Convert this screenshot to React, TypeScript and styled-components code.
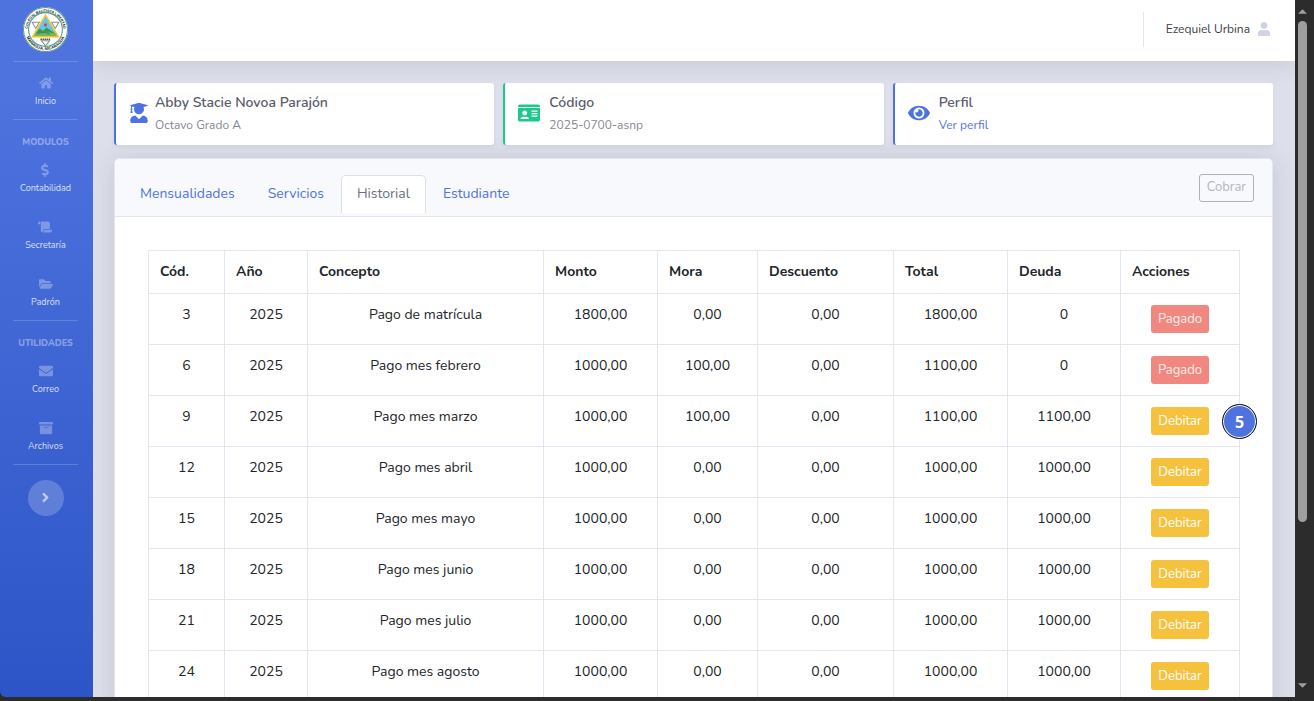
import React from "react";
import styled, { createGlobalStyle } from "styled-components";
import type { IconType } from "react-icons";
import {
  FaHome,
  FaDollarSign,
  FaScroll,
  FaFolderOpen,
  FaEnvelope,
  FaArchive,
  FaAngleRight,
  FaUserGraduate,
  FaIdCard,
  FaEye,
  FaUser,
} from "react-icons/fa";

const GlobalStyle = createGlobalStyle`
  *, *::before, *::after { box-sizing: border-box; }
  body {
    margin: 0;
    background: #2c2c2c;
    color: #212529;
    font-family: Nunito, Lato, "Liberation Sans", sans-serif;
    font-size: 14px;
    line-height: 22px;
  }
  a { text-decoration: none; }
  button { font-family: inherit; cursor: pointer; }
`;

const Window = styled.div`
  display: flex;
  height: 100vh;
  padding-bottom: 4px;
  overflow: hidden;
`;

const Viewport = styled.div`
  display: flex;
  flex: 1;
  min-width: 0;
  overflow: hidden;
  border-bottom-left-radius: 6px;
`;

const Sidebar = styled.nav`
  display: flex;
  flex-direction: column;
  align-items: center;
  flex: none;
  width: 93px;
  padding-right: 2px;
  background: linear-gradient(180deg, #4e73df 91px, #224abe 914px);
`;

const Brand = styled.a`
  display: flex;
  justify-content: center;
  padding: 7px 0 9px;
`;

const Divider = styled.hr`
  flex: none;
  width: 65px;
  height: 1px;
  margin: 0;
  border: 0;
  background: rgba(255, 255, 255, 0.18);
`;

const NavHeading = styled.div`
  height: 29px;
  padding-top: 16px;
  color: rgba(255, 255, 255, 0.4);
  font-size: 9px;
  font-weight: 800;
  line-height: 13px;
`;

const NavLink = styled.a`
  display: flex;
  flex-direction: column;
  align-items: center;
  height: 57px;
  padding-top: 14px;
  color: rgba(255, 255, 255, 0.8);
  font-size: 9px;
  line-height: 15px;

  svg {
    width: 14px;
    height: 14px;
    margin-bottom: 4px;
    color: rgba(255, 255, 255, 0.3);
  }
`;

const ToggleButton = styled.button`
  display: flex;
  align-items: center;
  justify-content: center;
  width: 36px;
  height: 36px;
  margin-top: 15px;
  padding: 0 0 2px;
  border: 0;
  border-radius: 50%;
  background: rgba(255, 255, 255, 0.2);
  color: rgba(255, 255, 255, 0.6);
  font-size: 15px;
`;

const Main = styled.main`
  flex: 1;
  min-width: 0;
  overflow: hidden;
  background: #dddfeb;
`;

const Topbar = styled.header`
  display: flex;
  align-items: center;
  justify-content: flex-end;
  height: 61px;
  padding: 0 24px 3px;
  background: #fff;
  box-shadow: 0 2px 25px rgba(58, 59, 69, 0.15);
`;

const UserLink = styled.a`
  display: flex;
  align-items: center;
  gap: 7px;
  height: 35px;
  padding-left: 22px;
  border-left: 1px solid #e3e6f0;
  color: #3a3b45;
  font-size: 12px;

  svg {
    width: 14px;
    height: 14px;
    color: #d1d3e2;
  }
`;

const Content = styled.div`
  padding: 22px 22px 22px 21px;
`;

const SummaryRow = styled.section`
  display: grid;
  grid-template-columns: repeat(3, 1fr);
  gap: 9px;
  margin-bottom: 13px;
`;

const SummaryCard = styled.article<{ $accent: string; $gap: number }>`
  display: flex;
  align-items: center;
  gap: ${(p) => p.$gap}px;
  height: 62px;
  padding: 0 13px;
  border-left: 2px solid ${(p) => p.$accent};
  border-radius: 3px;
  background: #fff;
  box-shadow: 0 2px 4px rgba(0, 0, 0, 0.05);

  > svg {
    flex: none;
    margin-bottom: 2px;
    color: ${(p) => p.$accent};
  }
`;

const SummaryTitle = styled.div`
  color: #5a5c69;
  font-size: 14px;
  font-weight: 600;
`;

const SummaryText = styled.div`
  color: #858796;
  font-size: 12px;

  a { color: #4e73df; }
`;

const Panel = styled.section`
  border: 1px solid #e3e6f0;
  border-radius: 5px;
  background: #fff;
  box-shadow: 0 2px 25px rgba(58, 59, 69, 0.15);
`;

const PanelHeader = styled.header`
  display: flex;
  align-items: center;
  justify-content: space-between;
  height: 58px;
  padding: 0 18px 0 9px;
  border-bottom: 1px solid #e3e6f0;
  border-radius: 5px 5px 0 0;
  background: #f8f9fc;
`;

const Tabs = styled.div`
  display: flex;
  gap: 1px;
  align-self: flex-end;
  margin-bottom: 3px;
`;

const Tab = styled.button<{ $active: boolean }>`
  height: 38px;
  padding: 0 15px 2px;
  border: 1px solid ${(p) => (p.$active ? "#dddfeb" : "transparent")};
  border-bottom: 0;
  border-radius: 5px 5px 0 0;
  background: ${(p) => (p.$active ? "#fff" : "transparent")};
  color: ${(p) => (p.$active ? "#6e707e" : "#4e73df")};
  font-size: 14px;
  line-height: 22px;
`;

const OutlineButton = styled.button`
  height: 28px;
  padding: 0 7px 2px;
  border: 1px solid #afb0ba;
  border-radius: 3px;
  background: transparent;
  color: #b4b5bf;
  font-size: 13px;
`;

const PanelBody = styled.div`
  padding: 33px 32px 33px 33px;
`;

const Table = styled.table`
  width: 100%;
  table-layout: fixed;
  border-collapse: collapse;
  line-height: 20px;
`;

const HeadCell = styled.th`
  padding: 11px;
  border: 1px solid #e3e6f0;
  font-weight: 700;
  text-align: left;
`;

const Cell = styled.td`
  position: relative;
  padding: 11px;
  border: 1px solid #e3e6f0;
  text-align: center;
  vertical-align: top;
`;

const ActionButton = styled.button<{ $paid: boolean }>`
  display: block;
  height: 28px;
  margin: 0 auto;
  padding: 0 7px 1px;
  border: 0;
  border-radius: 3px;
  background: ${(p) => (p.$paid ? "#f08880" : "#f6c23e")};
  color: ${(p) => (p.$paid ? "#fdeeed" : "#fff")};
  font-size: 13px;
`;

const StepBadge = styled.span`
  position: absolute;
  top: 50%;
  right: -18px;
  z-index: 1;
  display: flex;
  align-items: center;
  justify-content: center;
  width: 35px;
  height: 35px;
  margin-top: -17px;
  border: 1px solid #111;
  border-radius: 50%;
  background: #4e73df;
  box-shadow: inset 0 0 0 1px #fff;
  color: #fff;
  font-family: "Noto Sans", "Open Sans", sans-serif;
  font-size: 16px;
  font-weight: 700;
`;

const Scrollbar = styled.div`
  display: flex;
  flex-direction: column;
  align-items: center;
  flex: none;
  width: 19px;
  padding: 9px 4px 9px 0;
  background: #2c2c2c;
`;

const ScrollTrack = styled.div`
  display: flex;
  flex-direction: column;
  flex: 1;
  width: 9px;
  padding: 7px 0;

  &::after {
    content: "";
    flex: 4;
  }
`;

const ScrollThumb = styled.div`
  flex: 13;
  border-radius: 5px;
  background: #9f9f9f;
`;

const ScrollArrow = styled.svg`
  display: block;
  flex: none;
`;

function Crest() {
  return (
    <svg width="45" height="45" viewBox="0 0 88 88" role="img" aria-label="Escudo del colegio">
      <defs>
        <path id="crest-top" d="M 10 53 A 35 35 0 1 1 78 53" />
        <path id="crest-bottom" d="M 4 44 A 40 40 0 0 0 84 44" />
        <clipPath id="crest-triangle">
          <path d="M44 17 L68 57 H20 Z" />
        </clipPath>
      </defs>
      <circle cx="44" cy="44" r="44" fill="#fff" />
      <circle cx="44" cy="44" r="43" fill="none" stroke="#5d9a88" strokeWidth="2" />
      <circle cx="44" cy="44" r="33" fill="#fff" stroke="#4f9a86" strokeWidth="2" />
      <g fill="#10201c" fontFamily="Liberation Sans, sans-serif" fontWeight="700">
        <text textAnchor="middle" fontSize="7">
          <textPath href="#crest-top" startOffset="50%">COLEGIO BAUTISTA LIBERTAD</textPath>
        </text>
        <text textAnchor="middle" fontSize="8">
          <textPath href="#crest-bottom" startOffset="50%">MANAGUA, NICARAGUA</textPath>
        </text>
      </g>
      <path d="M18 30 H32 L25 42 Z M56 30 H70 L63 42 Z M36 66 H52 L44 76 Z" fill="#fff" stroke="#8b918f" strokeWidth="2" />
      <g clipPath="url(#crest-triangle)">
        <rect x="18" y="14" width="52" height="46" fill="#65c5ee" />
        <path d="M22 54 L33 42 L39 47 L46 40 L66 54 V60 H20 Z" fill="#3e9a3c" />
        <path d="M18 53 Q44 46 70 53 V60 H18 Z" fill="#79b844" />
        <path d="M28 52 Q44 47 52 53" fill="none" stroke="#2583b6" strokeWidth="2" />
      </g>
      <path d="M44 16 L69 58 H19 Z" fill="none" stroke="#efc62f" strokeWidth="3" />
      <circle cx="44" cy="35" r="3" fill="#d64450" />
      <path d="M34 63 H54" stroke="#555" strokeWidth="3" strokeDasharray="3 1" />
    </svg>
  );
}

interface NavEntry {
  label: string;
  Icon: IconType;
}

const modules: NavEntry[] = [
  { label: "Contabilidad", Icon: FaDollarSign },
  { label: "Secretaría", Icon: FaScroll },
  { label: "Padrón", Icon: FaFolderOpen },
];

const utilities: NavEntry[] = [
  { label: "Correo", Icon: FaEnvelope },
  { label: "Archivos", Icon: FaArchive },
];

function NavItem({ label, Icon }: NavEntry) {
  return (
    <NavLink href="#">
      <Icon aria-hidden />
      {label}
    </NavLink>
  );
}

const tabs = ["Mensualidades", "Servicios", "Historial", "Estudiante"];

const columns = [
  { title: "Cód.", width: 76 },
  { title: "Año", width: 83 },
  { title: "Concepto", width: 236 },
  { title: "Monto", width: 114 },
  { title: "Mora", width: 100 },
  { title: "Descuento", width: 136 },
  { title: "Total", width: 114 },
  { title: "Deuda", width: 113 },
  { title: "Acciones", width: 119 },
];

const payments = [
  ["3", "2025", "Pago de matrícula", "1800,00", "0,00", "0,00", "1800,00", "0"],
  ["6", "2025", "Pago mes febrero", "1000,00", "100,00", "0,00", "1100,00", "0"],
  ["9", "2025", "Pago mes marzo", "1000,00", "100,00", "0,00", "1100,00", "1100,00"],
  ["12", "2025", "Pago mes abril", "1000,00", "0,00", "0,00", "1000,00", "1000,00"],
  ["15", "2025", "Pago mes mayo", "1000,00", "0,00", "0,00", "1000,00", "1000,00"],
  ["18", "2025", "Pago mes junio", "1000,00", "0,00", "0,00", "1000,00", "1000,00"],
  ["21", "2025", "Pago mes julio", "1000,00", "0,00", "0,00", "1000,00", "1000,00"],
  ["24", "2025", "Pago mes agosto", "1000,00", "0,00", "0,00", "1000,00", "1000,00"],
];

export default function App() {
  return (
    <>
      <GlobalStyle />
      <Window>
        <Viewport>
          <Sidebar>
            <Brand href="#"><Crest /></Brand>
            <Divider />
            <NavItem label="Inicio" Icon={FaHome} />
            <Divider />
            <NavHeading>MODULOS</NavHeading>
            {modules.map((m) => <NavItem key={m.label} {...m} />)}
            <Divider />
            <NavHeading>UTILIDADES</NavHeading>
            {utilities.map((m) => <NavItem key={m.label} {...m} />)}
            <Divider />
            <ToggleButton aria-label="Expandir menú"><FaAngleRight /></ToggleButton>
          </Sidebar>
          <Main>
            <Topbar>
              <UserLink href="#">Ezequiel Urbina <FaUser /></UserLink>
            </Topbar>
            <Content>
              <SummaryRow>
                <SummaryCard $accent="#4e73df" $gap={6}>
                  <FaUserGraduate size={20} />
                  <div>
                    <SummaryTitle>Abby Stacie Novoa Parajón</SummaryTitle>
                    <SummaryText>Octavo Grado A</SummaryText>
                  </div>
                </SummaryCard>
                <SummaryCard $accent="#1cc88a" $gap={9}>
                  <FaIdCard size={22} />
                  <div>
                    <SummaryTitle>Código</SummaryTitle>
                    <SummaryText>2025-0700-asnp</SummaryText>
                  </div>
                </SummaryCard>
                <SummaryCard $accent="#4e73df" $gap={9}>
                  <FaEye size={22} />
                  <div>
                    <SummaryTitle>Perfil</SummaryTitle>
                    <SummaryText><a href="#">Ver perfil</a></SummaryText>
                  </div>
                </SummaryCard>
              </SummaryRow>
              <Panel>
                <PanelHeader>
                  <Tabs role="tablist">
                    {tabs.map((t) => (
                      <Tab key={t} role="tab" aria-selected={t === "Historial"} $active={t === "Historial"}>{t}</Tab>
                    ))}
                  </Tabs>
                  <OutlineButton disabled>Cobrar</OutlineButton>
                </PanelHeader>
                <PanelBody>
                  <Table>
                    <colgroup>
                      {columns.map((c) => <col key={c.title} width={c.width} />)}
                    </colgroup>
                    <thead>
                      <tr>{columns.map((c) => <HeadCell key={c.title} scope="col">{c.title}</HeadCell>)}</tr>
                    </thead>
                    <tbody>
                      {payments.map((row) => {
                        const paid = row[7] === "0";
                        return (
                          <tr key={row[0]}>
                            {row.map((value, i) => <Cell key={i}>{value}</Cell>)}
                            <Cell>
                              <ActionButton $paid={paid} disabled={paid}>{paid ? "Pagado" : "Debitar"}</ActionButton>
                              {row[0] === "9" && <StepBadge>5</StepBadge>}
                            </Cell>
                          </tr>
                        );
                      })}
                    </tbody>
                  </Table>
                </PanelBody>
              </Panel>
            </Content>
          </Main>
        </Viewport>
        <Scrollbar aria-hidden>
          <ScrollArrow width="9" height="5" viewBox="0 0 10 5"><path d="M0 5 L5 0 L10 5 Z" fill="#9f9f9f" /></ScrollArrow>
          <ScrollTrack><ScrollThumb /></ScrollTrack>
          <ScrollArrow width="9" height="5" viewBox="0 0 10 5"><path d="M0 0 L5 5 L10 0 Z" fill="#9f9f9f" /></ScrollArrow>
        </Scrollbar>
      </Window>
    </>
  );
}
